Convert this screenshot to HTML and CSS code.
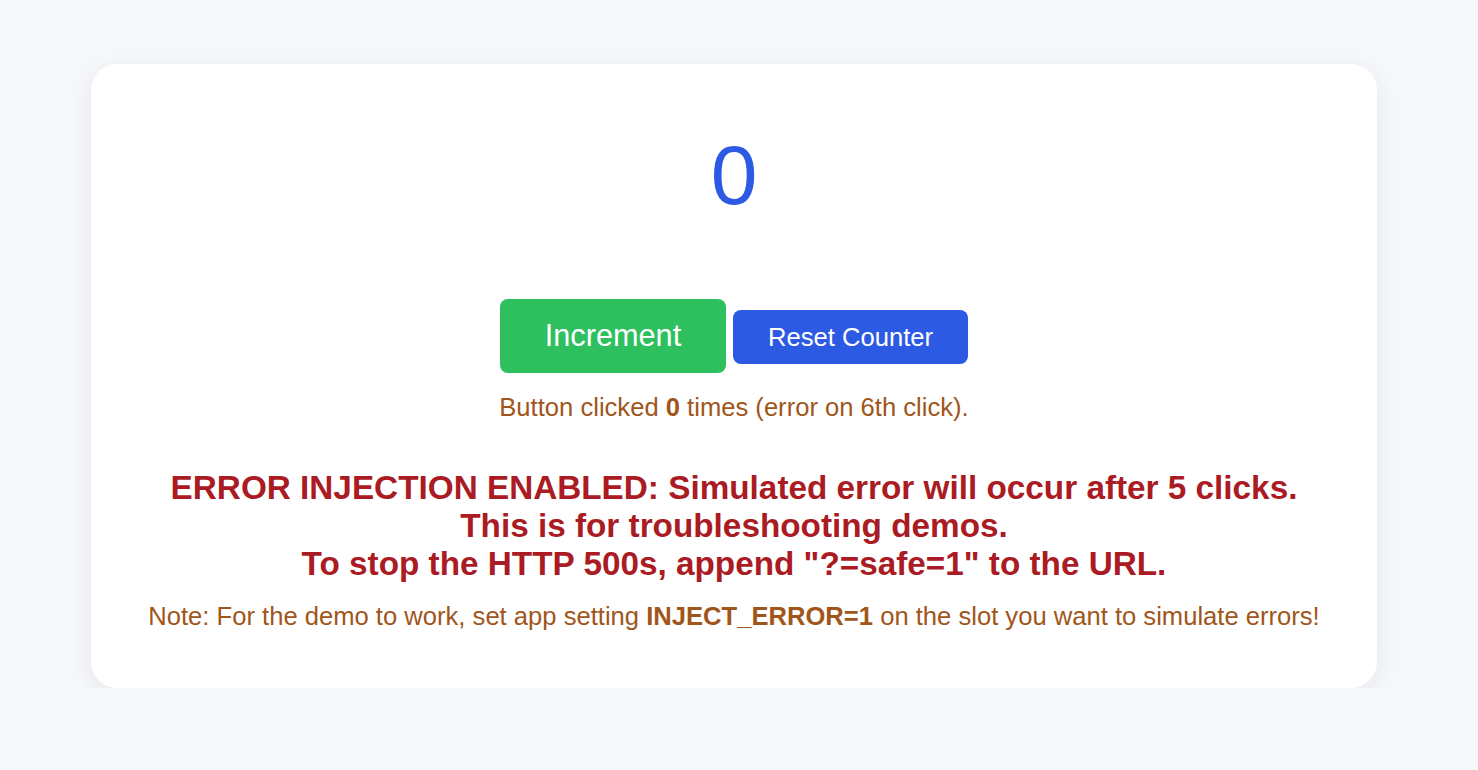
FILE: index.html
```html
<!DOCTYPE html>
<html lang="en">
<head>
<meta charset="utf-8">
<title>Counter</title>
<link rel="stylesheet" href="styles.css">
</head>
<body>
<main class="page">
  <section class="card">
    <div class="counter">0</div>
    <div class="actions">
      <button class="btn btn-increment">Increment</button>
      <button class="btn btn-reset">Reset Counter</button>
    </div>
    <p class="clicks">Button clicked <strong>0</strong> times (error on 6th click).</p>
    <p class="warning">ERROR INJECTION ENABLED: Simulated error will occur after 5 clicks.<br>This is for troubleshooting demos.<br>To stop the HTTP 500s, append "?=safe=1" to the URL.</p>
    <p class="note">Note: For the demo to work, set app setting <strong>INJECT_ERROR=1</strong> on the slot you want to simulate errors!</p>
  </section>
</main>
</body>
</html>
```
FILE: styles.css
```css
html, body {
  margin: 0;
  padding: 0;
}
body {
  background: #f7f8fa;
  font-family: "Liberation Sans", Arial, Helvetica, sans-serif;
  font-size: 25.6px;
}
.page {
  padding: 64px 0 0 91px;
}
.card {
  box-sizing: border-box;
  width: 1286px;
  height: 624px;
  background: #ffffff;
  border-radius: 26px;
  box-shadow: 0 6px 28px rgba(20, 30, 60, 0.08);
  padding-top: 63px;
  display: flex;
  flex-direction: column;
  align-items: center;
  text-align: center;
}
.counter {
  font-size: 84px;
  line-height: normal;
  color: #2c5ae3;
}
.actions {
  margin-top: 75px;
  display: flex;
  align-items: center;
  gap: 7px;
}
.btn {
  font-family: inherit;
  border: none;
  color: #ffffff;
  cursor: pointer;
  line-height: normal;
}
.btn-increment {
  background: #2ebf5e;
  font-size: 30.7px;
  width: 226px;
  height: 74px;
  border-radius: 8px;
}
.btn-reset {
  background: #2c5ae3;
  font-size: 25.6px;
  width: 235px;
  height: 54px;
  margin-top: 2px;
  border-radius: 8px;
}
.clicks {
  margin: 20px 0 0;
  color: #a0561b;
  line-height: normal;
}
.warning {
  margin: 47px 0 0;
  font-size: 33.3px;
  font-weight: bold;
  color: #aa1b23;
  line-height: normal;
}
.note {
  margin: 19px 0 0;
  color: #a0561b;
  line-height: normal;
}
```
